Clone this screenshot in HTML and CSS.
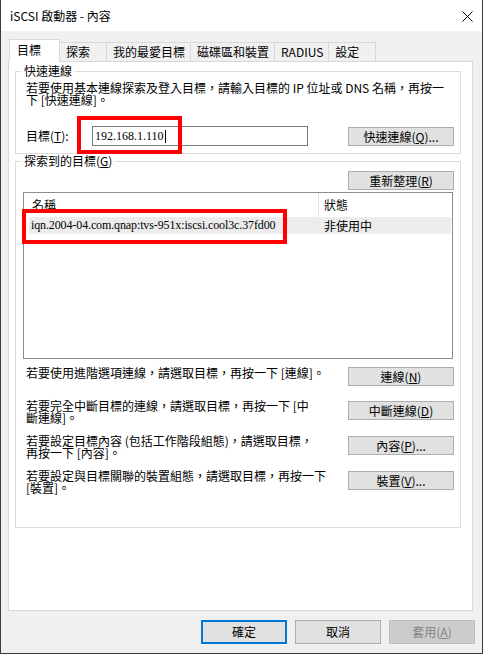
FILE: index.html
```html
<!DOCTYPE html>
<html lang="zh-Hant">
<head>
<meta charset="utf-8">
<title>iSCSI 啟動器 - 內容</title>
<link rel="stylesheet" href="styles.css">
</head>
<body>
<div class="window">
  <div class="titlebar">
    <span class="title">iSCSI 啟動器 - 內容</span>
    <svg class="close" width="11" height="11" viewBox="0 0 11 11"><path d="M0.5 0.5L10.5 10.5M10.5 0.5L0.5 10.5" stroke="#000" stroke-width="1" fill="none"/></svg>
  </div>
  <div class="tabs">
    <div class="tab active">目標</div>
    <div class="tab">探索</div>
    <div class="tab">我的最愛目標</div>
    <div class="tab">磁碟區和裝置</div>
    <div class="tab">RADIUS</div>
    <div class="tab">設定</div>
  </div>
  <div class="panel">
    <fieldset class="group g1">
      <legend>快速連線</legend>
      <div class="group-body">
        <p class="desc">若要使用基本連線探索及登入目標，請輸入目標的 IP 位址或 DNS 名稱，再按一<br>下 [快速連線]。</p>
        <div class="target-row">
          <label class="target-label">目標(<u>T</u>):</label>
          <div class="input">192.168.1.110<span class="caret"></span></div>
          <button class="btn push-right">快速連線(<u>Q</u>)...</button>
        </div>
      </div>
    </fieldset>
    <fieldset class="group g2">
      <legend>探索到的目標(<u>G</u>)</legend>
      <div class="group-body">
        <div class="refresh-row"><button class="btn">重新整理(<u>R</u>)</button></div>
        <div class="list">
          <div class="list-head">
            <div class="c-name">名稱</div>
            <div class="c-status">狀態</div>
          </div>
          <div class="list-row">
            <div class="c-name serif">iqn.2004-04.com.qnap:tvs-951x:iscsi.cool3c.37fd00</div>
            <div class="c-status">非使用中</div>
          </div>
        </div>
        <div class="actions">
          <div class="action first">
            <p>若要使用進階選項連線，請選取目標，再按一下 [連線]。</p>
            <button class="btn">連線(<u>N</u>)</button>
          </div>
          <div class="action">
            <p>若要完全中斷目標的連線，請選取目標，再按一下 [中<br>斷連線]。</p>
            <button class="btn">中斷連線(<u>D</u>)</button>
          </div>
          <div class="action">
            <p>若要設定目標內容 (包括工作階段組態)，請選取目標，<br>再按一下 [內容]。</p>
            <button class="btn">內容(<u>P</u>)...</button>
          </div>
          <div class="action">
            <p>若要設定與目標關聯的裝置組態，請選取目標，再按一下<br>[裝置]。</p>
            <button class="btn">裝置(<u>V</u>)...</button>
          </div>
        </div>
      </div>
    </fieldset>
  </div>
  <div class="footer">
    <button class="btn fbtn ok">確定</button>
    <button class="btn fbtn">取消</button>
    <button class="btn fbtn disabled">套用(<u>A</u>)</button>
  </div>
  <div class="mark m1"></div>
  <div class="mark m2"></div>
</div>
</body>
</html>
```

FILE: styles.css
```css
* { box-sizing: border-box; }
html, body { margin: 0; padding: 0; }
body {
  width: 483px;
  height: 654px;
  overflow: hidden;
  font-family: "Noto Sans CJK TC", "Noto Sans", sans-serif;
  font-size: 12px;
  color: #000;
  background: #f0f0f0;
}
.window {
  position: relative;
  width: 483px;
  height: 654px;
  background: #f0f0f0;
  border: 1px solid #3a3a3a;
  border-top: none;
  display: flex;
  flex-direction: column;
}
.titlebar {
  height: 31px;
  flex: 0 0 31px;
  background: #fff;
  display: flex;
  align-items: center;
  justify-content: space-between;
  padding: 0 9px;
}
.title { font-size: 12px; line-height: 14px; }
.close { display: block; margin-top: 2px; }

.tabs {
  display: flex;
  align-items: flex-end;
  margin: 8px 0 -1px 8px;
  position: relative;
  z-index: 1;
}
.tab {
  height: 19px;
  margin-bottom: 1px;
  min-width: 47px;
  padding: 0 5px 0 6px;
  border: 1px solid #d9d9d9;
  border-left: none;
  border-bottom: none;
  background: #f0f0f0;
  line-height: 17px;
  white-space: nowrap;
}
.tab.active {
  height: 23px;
  margin-bottom: 0;
  min-width: 51px;
  padding-left: 7px;
  border-left: 1px solid #d9d9d9;
  background: #fff;
  line-height: 19px;
}

.panel {
  margin: 0 9px 0 7px;
  height: 550px;
  flex: 0 0 550px;
  background: #fff;
  border: 1px solid #d9d9d9;
  padding: 3px 0 0 6px;
}
.group {
  margin: 0;
  padding: 0;
  width: 446px;
  min-width: 0;
  border: 1px solid #dcdcdc;
}
.group legend {
  padding: 0 3px;
  margin-left: 5px;
  line-height: 12px;
}
.g1 .group-body { padding: 5px 6px 7px 10px; }
.g2 { margin-top: 1px; }
.g2 .group-body { padding: 4px 6px 33px 7px; }

.desc { margin: 0; line-height: 12px; white-space: nowrap; }
.target-row {
  display: flex;
  align-items: center;
  height: 20px;
  margin-top: 20px;
}
.target-label { width: 66px; flex: 0 0 66px; line-height: 14px; }
.input {
  width: 216px;
  height: 20px;
  border: 1px solid #7a7a7a;
  background: #fff;
  padding: 0 2px;
  font-family: "Liberation Serif", serif;
  font-size: 12px;
  display: flex;
  align-items: center;
}
.caret {
  display: inline-block;
  width: 1px;
  height: 13px;
  background: #000;
  margin-left: 1px;
}
.btn {
  width: 106px;
  height: 19px;
  padding: 0;
  margin: 0;
  background: #e1e1e1;
  border: 1px solid #adadad;
  font-family: inherit;
  font-size: 12px;
  line-height: 17px;
  color: #000;
  text-align: center;
  white-space: nowrap;
}
.push-right { margin-left: auto; }
.refresh-row { display: flex; justify-content: flex-end; }

.list {
  margin-top: 2px;
  width: 430px;
  height: 167px;
  border: 1px solid #8c8c8c;
  background: #fff;
}
.list-head { display: flex; height: 24px; line-height: 24px; }
.list-head .c-name {
  width: 295px;
  border-right: 1px solid #e5e5e5;
  padding-left: 8px;
}
.list-head .c-status { padding-left: 5px; }
.list-row {
  display: flex;
  height: 17px;
  line-height: 17px;
  margin: 0 1px 0 5px;
  background: #ececec;
}
.list-row .c-name { width: 290px; padding-left: 2px; white-space: nowrap; }
.list-row .c-status { padding-left: 5px; }
.serif { font-family: "Liberation Serif", serif; font-size: 12px; letter-spacing: -0.12px; }

.actions {
  margin-top: 8px;
  padding-left: 3px;
  display: flex;
  flex-direction: column;
  gap: 11px;
}
.action {
  display: flex;
  justify-content: space-between;
  align-items: flex-start;
  min-height: 24px;
}
.action.first { min-height: 22px; }
.action p { margin: 0; line-height: 12px; white-space: nowrap; }
.action .btn { margin-top: 1px; }
.action.first .btn { margin-top: 0; }

.footer {
  display: flex;
  justify-content: flex-end;
  gap: 8px;
  margin-top: 9px;
  padding-right: 7px;
}
.fbtn { width: 86px; height: 24px; line-height: 22px; }
.fbtn.ok { border: 2px solid #0078d7; line-height: 20px; }
.fbtn.disabled { background: #cccccc; border-color: #bfbfbf; color: #838383; }

.mark {
  position: absolute;
  border: 4px solid #ff0000;
}
.m1 { left: 76px; top: 116px; width: 105px; height: 38px; }
.m2 { left: 21px; top: 209px; width: 265px; height: 35px; }
```
